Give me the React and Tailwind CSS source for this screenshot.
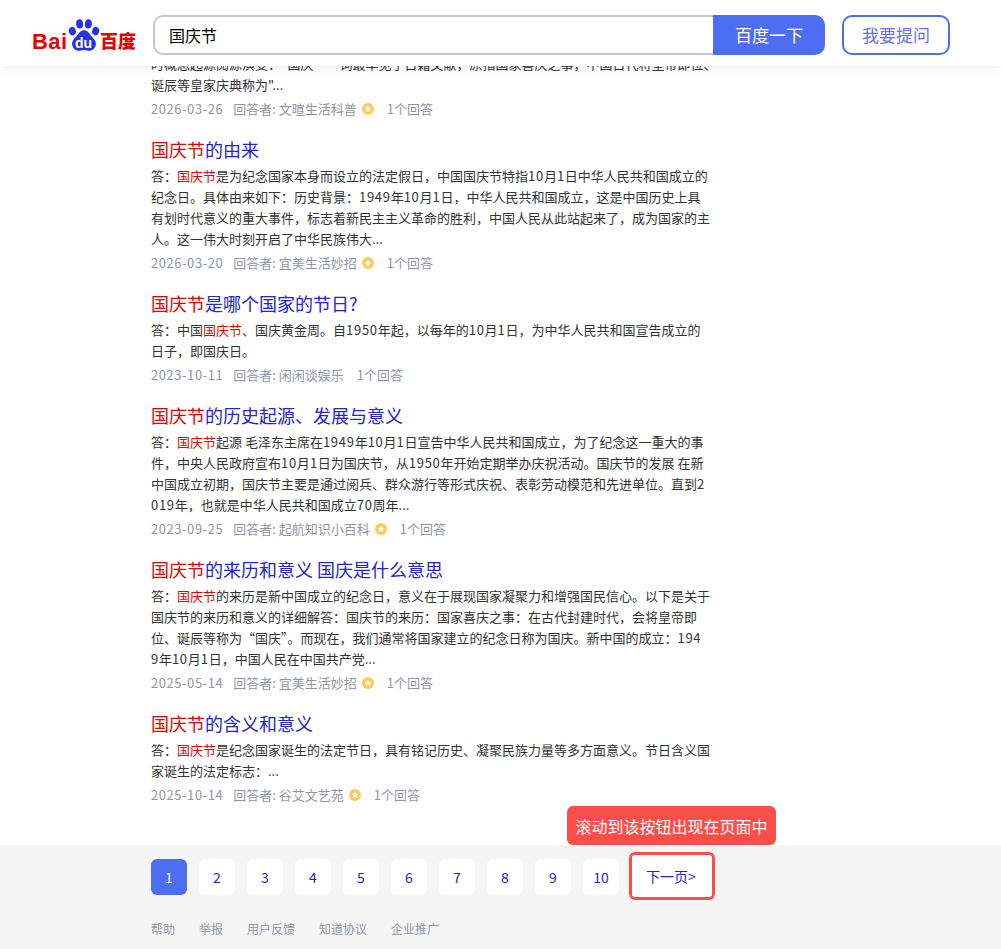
import React from 'react';

const results = [
  {
    title: '的由来',
    lead: '答\uFF1A',
    lines: [
      '是为纪念国家本身而设立的法定假日\uFF0C中国国庆节特指10月1日中华人民共和国成立的',
      '纪念日。具体由来如下\uFF1A历史背景\uFF1A1949年10月1日\uFF0C中华人民共和国成立\uFF0C这是中国历史上具',
      '有划时代意义的重大事件\uFF0C标志着新民主主义革命的胜利\uFF0C中国人民从此站起来了\uFF0C成为国家的主',
      '人。这一伟大时刻开启了中华民族伟大...',
    ],
    date: '2026-03-20',
    author: '宜美生活妙招',
    badge: true,
  },
  {
    title: '是哪个国家的节日?',
    lead: '答\uFF1A中国',
    lines: [
      '、国庆黄金周。自1950年起\uFF0C以每年的10月1日\uFF0C为中华人民共和国宣告成立的',
      '日子\uFF0C即国庆日。',
    ],
    date: '2023-10-11',
    author: '闲闲谈娱乐',
  },
  {
    title: '的历史起源、发展与意义',
    lead: '答\uFF1A',
    lines: [
      '起源 毛泽东主席在1949年10月1日宣告中华人民共和国成立\uFF0C为了纪念这一重大的事',
      '件\uFF0C中央人民政府宣布10月1日为国庆节\uFF0C从1950年开始定期举办庆祝活动。国庆节的发展 在新',
      '中国成立初期\uFF0C国庆节主要是通过阅兵、群众游行等形式庆祝、表彰劳动模范和先进单位。直到2',
      '019年\uFF0C也就是中华人民共和国成立70周年...',
    ],
    date: '2023-09-25',
    author: '起航知识小百科',
    badge: true,
  },
  {
    title: '的来历和意义 国庆是什么意思',
    lead: '答\uFF1A',
    lines: [
      '的来历是新中国成立的纪念日\uFF0C意义在于展现国家凝聚力和增强国民信心。以下是关于',
      '国庆节的来历和意义的详细解答\uFF1A国庆节的来历\uFF1A国家喜庆之事\uFF1A在古代封建时代\uFF0C会将皇帝即',
      '位、诞辰等称为“国庆”。而现在\uFF0C我们通常将国家建立的纪念日称为国庆。新中国的成立\uFF1A194',
      '9年10月1日\uFF0C中国人民在中国共产党...',
    ],
    date: '2025-05-14',
    author: '宜美生活妙招',
    badge: true,
  },
  {
    title: '的含义和意义',
    lead: '答\uFF1A',
    lines: [
      '是纪念国家诞生的法定节日\uFF0C具有铭记历史、凝聚民族力量等多方面意义。节日含义国',
      '家诞生的法定标志\uFF1A...',
    ],
    date: '2025-10-14',
    author: '谷艾文艺苑',
    badge: true,
  },
];

// digits run a bit wider in the original font
const Digits = ({ text }) =>
  text.split(/(\d+)/).map((part, i) =>
    /\d/.test(part) ? (
      <span key={i} className="tracking-[0.7px]">
        {part}
      </span>
    ) : (
      part
    )
  );

const Badge = () => (
  <svg width="12" height="12" viewBox="0 0 12 12" className="ml-[5px] shrink-0">
    <circle cx="6" cy="6" r="6" fill="#fbcb5c" />
    <path d="M6 2.600l1 2.100 2.300.3-1.700 1.600.4 2.300L6 7.800 4 8.900l.4-2.300L2.700 5 5 4.700z" fill="#fff" />
  </svg>
);

const Meta = ({ date, author, badge }) => (
  <div className="flex items-center h-[22px] mt-[3px] text-[13px] text-[#9195a3]">
    <span className="tracking-[0.55px]">{date}</span>
    <span className="ml-[10px]">回答者: {author}</span>
    {badge && <Badge />}
    <span className="ml-[13px]">1个回答</span>
  </div>
);

const Result = ({ item }) => (
  <div className="mb-[16px]">
    <h3 className="text-[18px] leading-[26px] text-[#2424d0] font-normal">
      <span className="text-[#e10601]">国庆节</span>
      {item.title}
    </h3>
    <div className="mt-[3px] text-[13px] leading-[21px] text-[#333] whitespace-nowrap">
      {item.lines.map((line, i) => (
        <p key={i}>
          {i === 0 && (
            <>
              {item.lead}
              <span className="text-[#e10601]">国庆节</span>
            </>
          )}
          <Digits text={line} />
        </p>
      ))}
    </div>
    <Meta date={item.date} author={item.author} badge={item.badge} />
  </div>
);

const Logo = () => (
  <div className="flex items-end h-[34px] w-[104px] shrink-0 whitespace-nowrap font-bold text-[#e10601] leading-none">
    <span className="w-[36px] text-[22px] leading-[20px] tracking-[0.4px] font-['Liberation_Sans',sans-serif]">Bai</span>
    <div className="relative w-[32px] h-[34px] shrink-0">
      <svg width="32" height="34" viewBox="0 0 33 34">
        <g fill="#2932e1">
          <ellipse cx="4.500" cy="13" rx="3.600" ry="4.400" transform="rotate(-15 4.500 13)" />
          <ellipse cx="12" cy="5.500" rx="3.600" ry="4.800" transform="rotate(-6 12 5.500)" />
          <ellipse cx="21" cy="5.500" rx="3.600" ry="4.800" transform="rotate(6 21 5.500)" />
          <ellipse cx="28.500" cy="13" rx="3.600" ry="4.400" transform="rotate(15 28.500 13)" />
          <path d="M16.500 12c-4 0-5.500 3.500-8 6.500C5.500 21.500 3.500 24 4.500 28c1 4 5 5.500 8 5.200 1.500-.2 2.500-.7 4-.7s2.500.5 4 .7c3 .3 7-1.200 8-5.200s-1-6.500-4-9.500c-2.500-3-4-6.500-8-6.500z" />
        </g>
      </svg>
      <span className="absolute left-[7px] top-[18px] text-[14px] leading-[14px] text-white font-['Liberation_Sans',sans-serif] font-bold">du</span>
    </div>
    <span className="mb-[2px] text-[18px] leading-[19px] font-black font-['Noto_Sans_CJK_SC',sans-serif]">百度</span>
  </div>
);

export default function App() {
  return (
    <div className="h-[949px] flex flex-col overflow-hidden bg-white font-['Noto_Sans_CJK_SC','Noto_Sans',sans-serif]">
      <header className="relative z-10 h-[66px] shrink-0 flex items-center pl-[32px] pt-[4px] bg-white shadow-[0_2px_10px_rgba(0,0,0,0.08)]">
        <Logo />
        <div className="ml-[17px] w-[672px] h-[40px] flex">
          <div className="flex-1 flex items-center pl-[14px] border-2 border-r-0 border-[#c4c7ce] rounded-l-[10px] text-[16px] text-black">
            国庆节
          </div>
          <button className="w-[112px] bg-[#4e6ef2] text-white text-[17px] rounded-r-[10px]">百度一下</button>
        </div>
        <button className="ml-[17px] w-[108px] h-[40px] border-2 border-[#4e6ef2] rounded-[10px] text-[17px] text-[#6570e8] bg-white">
          我要提问
        </button>
      </header>

      <main className="flex-1 overflow-hidden pl-[151px]">
        <div className="w-[560px] -mt-[13px]">
          <div className="mb-[16px]">
            <div className="text-[13px] leading-[21px] text-[#333] whitespace-nowrap">
              <p>{'时概念起源阅源演变\uFF1A“国庆”一词最早见于古籍文献\uFF0C原指国家喜庆之事\uFF0C中国古代将皇帝即位、'}</p>
              <p>诞辰等皇家庆典称为"...</p>
            </div>
            <Meta date="2026-03-26" author="文暄生活科普" badge />
          </div>
          {results.map((item) => (
            <Result key={item.date + item.title} item={item} />
          ))}
        </div>
      </main>

      <footer className="relative h-[104px] shrink-0 bg-[#f5f5f6] pl-[151px] pt-[7px]">
        <div className="absolute left-[567px] -top-[39px] w-[209px] h-[39px] flex items-center justify-center rounded-[6px] bg-[#fb4d4a] text-white text-[16px] whitespace-nowrap">
          滚动到该按钮出现在页面中
        </div>
        <div className="flex items-start gap-3 h-[48px]">
          <div className="mt-[7px] w-9 h-9 flex items-center justify-center rounded-md bg-[#4e6ef2] text-white text-sm">1</div>
          {[2, 3, 4, 5, 6, 7, 8, 9, 10].map((n) => (
            <div key={n} className="mt-[7px] w-9 h-9 flex items-center justify-center rounded-md bg-white text-[#2424d0] text-sm">
              {n}
            </div>
          ))}
          <div className="-ml-[2px] w-[86px] h-[48px] flex items-center justify-center pr-[2px] rounded-md bg-white border-[3px] border-[#fb4d4a] text-[#2424d0] text-sm">
            下一页&gt;
          </div>
        </div>
        <div className="flex gap-6 mt-[19px] text-xs leading-5 text-[#9195a3]">
          <span>帮助</span>
          <span>举报</span>
          <span>用户反馈</span>
          <span>知道协议</span>
          <span>企业推广</span>
        </div>
      </footer>
    </div>
  );
}
